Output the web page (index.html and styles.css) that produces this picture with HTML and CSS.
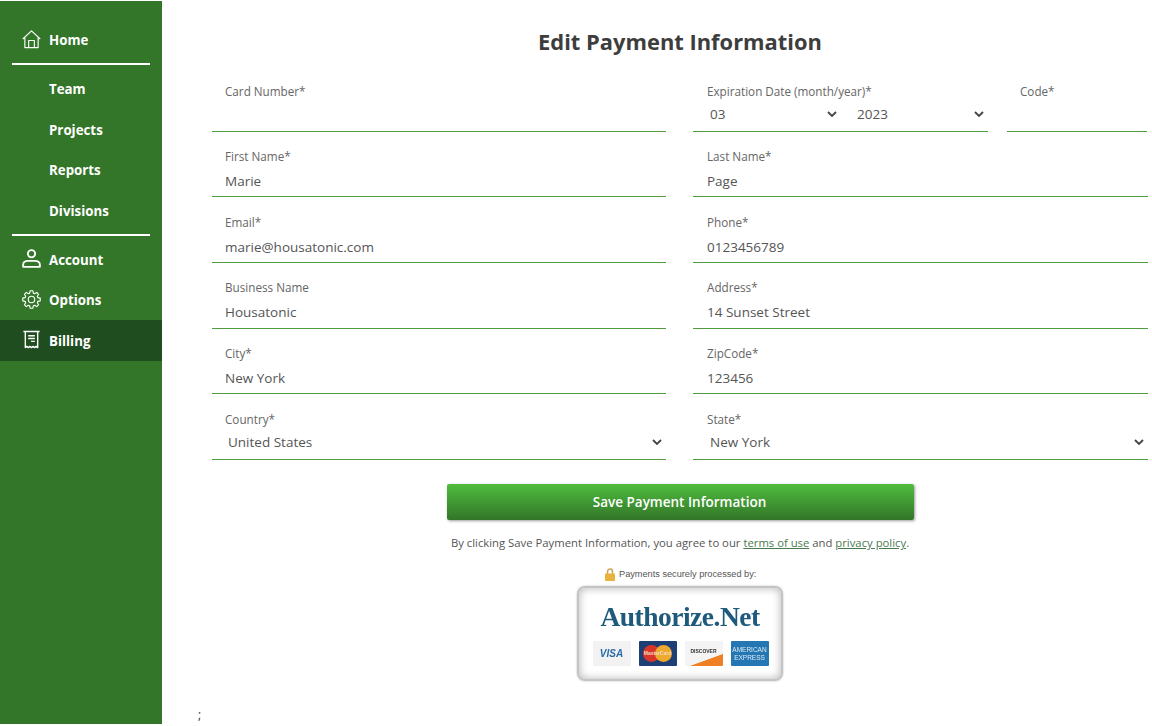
FILE: index.html
```html
<!DOCTYPE html>
<html lang="en">
<head>
    <meta charset="UTF-8">
    <meta name="viewport" content="width=device-width, initial-scale=1.0">
    <title>Edit Payment Information</title>
    <link rel="stylesheet" href="styles.css">
</head>
<body>
    <nav class="sidebar">
        <a class="nav-item" href="#">
            <svg class="nav-icon" viewBox="0 0 20 20"><path d="M.8 9.500 10 1l9.200 8.500M3 8v10.500h14V8M7 18.500V11h6v7.500"/></svg>
            Home
        </a>
        <hr class="nav-rule">
        <a class="nav-item" href="#">Team</a>
        <a class="nav-item" href="#">Projects</a>
        <a class="nav-item" href="#">Reports</a>
        <a class="nav-item" href="#">Divisions</a>
        <hr class="nav-rule">
        <a class="nav-item" href="#">
            <svg class="nav-icon icon-bold" viewBox="0 0 20 20"><circle cx="10" cy="5" r="3.800"/><path d="M1.200 18.800v-2.300c0-2.500 2.500-4 5-4h7.600c2.500 0 5 1.500 5 4v2.300z"/></svg>
            Account
        </a>
        <a class="nav-item" href="#">
            <svg class="nav-icon" viewBox="0 0 20 20"><circle cx="10" cy="10" r="3.400"/><path d="M8.070 3.270 8.550.81h2.900l.48 2.460 1.460.61 2.080-1.400 2.050 2.050-1.400 2.080.61 1.460 2.460.48v2.900l-2.460.48-.61 1.460 1.400 2.080-2.050 2.050-2.080-1.400-1.460.61-.48 2.460h-2.900l-.48-2.460-1.460-.61-2.080 1.400-2.050-2.050 1.400-2.080-.61-1.460-2.460-.48v-2.900l2.460-.48.61-1.460-1.400-2.080 2.050-2.050 2.080 1.400z"/></svg>
            Options
        </a>
        <a class="nav-item nav-active" href="#">
            <svg class="nav-icon icon-receipt" viewBox="0 0 20 20"><path d="M1.500 1.500h17M3.500 1.500v17l1.600-1.200 1.600 1.200 1.650-1.200L10 18.500l1.650-1.200 1.650 1.200 1.600-1.200 1.600 1.200v-17M6.500 6h7M6.500 9h7M9.500 12h4"/></svg>
            Billing
        </a>
    </nav>

    <main class="content">
        <h1 class="page-title">Edit Payment Information</h1>
        <form class="payment-form">
            <div class="form-row">
                <div class="field">
                    <label>Card Number*</label>
                    <input type="text">
                </div>
                <div class="expiry-row">
                    <div class="field col-right expiry">
                        <label>Expiration Date (month/year)*</label>
                        <div class="select-pair">
                            <div class="fake-select">03 <svg class="chevron" viewBox="0 0 10 6"><path d="M1 1l4 4 4-4"/></svg></div>
                            <div class="fake-select">2023 <svg class="chevron" viewBox="0 0 10 6"><path d="M1 1l4 4 4-4"/></svg></div>
                        </div>
                    </div>
                    <div class="field">
                        <label>Code*</label>
                        <input type="text">
                    </div>
                </div>
            </div>
            <div class="form-row">
                <div class="field"><label>First Name*</label><input type="text" value="Marie"></div>
                <div class="field col-right"><label>Last Name*</label><input type="text" value="Page"></div>
            </div>
            <div class="form-row">
                <div class="field"><label>Email*</label><input type="text" value="marie@housatonic.com"></div>
                <div class="field col-right"><label>Phone*</label><input type="text" value="0123456789"></div>
            </div>
            <div class="form-row">
                <div class="field"><label>Business Name</label><input type="text" value="Housatonic"></div>
                <div class="field col-right"><label>Address*</label><input type="text" value="14 Sunset Street"></div>
            </div>
            <div class="form-row">
                <div class="field"><label>City*</label><input type="text" value="New York"></div>
                <div class="field col-right"><label>ZipCode*</label><input type="text" value="123456"></div>
            </div>
            <div class="form-row">
                <div class="field">
                    <label>Country*</label>
                    <div class="fake-select">United States <svg class="chevron" viewBox="0 0 10 6"><path d="M1 1l4 4 4-4"/></svg></div>
                </div>
                <div class="field col-right">
                    <label>State*</label>
                    <div class="fake-select">New York <svg class="chevron" viewBox="0 0 10 6"><path d="M1 1l4 4 4-4"/></svg></div>
                </div>
            </div>
            <button type="button" class="save-button">Save Payment Information</button>
            <p class="terms">By clicking Save Payment Information, you agree to our <a href="#">terms of use</a> and <a href="#">privacy policy</a>.</p>
        </form>

        <div class="secure-note">
            <svg class="lock" viewBox="0 0 10 13"><path class="lock-arc" d="M2.500 6V3.500a2.500 2.500 0 0 1 5 0V6"/><rect y="5.500" width="10" height="7.500" rx="1"/></svg>
            Payments securely processed by:
        </div>
        <div class="auth-badge">
            <div class="auth-name">Authorize.Net</div>
            <div class="cards">
                <div class="card card-visa">VISA</div>
                <div class="card card-mc"><span class="mc-red"></span><span class="mc-yellow"></span><span class="mc-name">MasterCard</span></div>
                <div class="card card-discover">DISCOVER</div>
                <div class="card card-amex">AMERICAN EXPRESS</div>
            </div>
        </div>
        <p class="stray">;</p>
    </main>
</body>
</html>
```

FILE: styles.css
```css
html, body {
    height: 100%;
}
body {
    margin: 0;
    display: flex;
    height: 724px;
    font-family: "Open Sans", "Noto Sans", sans-serif;
    color: #444;
    background-color: white;
    overflow: hidden;
}
.sidebar {
    width: 162px;
    flex-shrink: 0;
    margin-top: 1px;
    padding-top: 18.500px;
    box-sizing: border-box;
    background-color: #337529;
    display: flex;
    flex-direction: column;
}
.nav-item {
    height: 40.500px;
    padding-top: 1.400px;
    padding-left: 49px;
    box-sizing: border-box;
    display: flex;
    align-items: center;
    position: relative;
    color: white;
    font-size: 13.300px;
    font-weight: 700;
    text-decoration: none;
}
.nav-active {
    background-color: #1f4d1f;
}
.nav-icon {
    position: absolute;
    left: 22px;
    top: 10px;
    width: 19px;
    height: 19px;
    fill: none;
    stroke: white;
    stroke-width: 1.200;
    stroke-linejoin: round;
}
.icon-bold {
    stroke-width: 2;
}
.icon-receipt {
    stroke-width: 1.500;
}
.nav-rule {
    height: 2px;
    margin: 3px 12px 3.500px;
    border: none;
    background-color: white;
}
.content {
    flex: 1;
    padding: 0 4px 0 50px;
    min-width: 0;
    position: relative;
}
.page-title {
    margin: 27px 0 16.800px;
    font-size: 21.900px;
    line-height: 30px;
    font-weight: 700;
    text-align: center;
    color: #3d3d3d;
}
.form-row {
    display: grid;
    grid-template-columns: 454px 455px;
    column-gap: 27px;
    height: 65.600px;
}
.field {
    display: flex;
    flex-direction: column;
    justify-content: flex-end;
    border-bottom: 1px solid #4f9d3e;
    box-sizing: border-box;
    height: 58px;
    min-width: 0;
}
.field label {
    padding-left: 13px;
    font-size: 11.700px;
    line-height: 16px;
    color: #666;
}
.field input {
    border: none;
    outline: none;
    width: 100%;
    box-sizing: border-box;
    height: 32.250px;
    padding: 1.600px 13px 0;
    font-family: inherit;
    font-size: 13.500px;
    color: #555;
}
.col-right label {
    padding-left: 14px;
}
.col-right input {
    padding-left: 14px;
}
.expiry-row {
    display: grid;
    grid-template-columns: 295px 140px;
    column-gap: 19px;
    margin-right: -1px;
}
.select-pair {
    display: grid;
    grid-template-columns: 148px 147px;
}
.select-pair .fake-select {
    padding-left: 17px;
    padding-right: 4px;
    padding-bottom: 2px;
}
.select-pair .fake-select + .fake-select {
    padding-left: 16px;
}
.fake-select {
    height: 32.250px;
    padding: 0 4px 1.400px 16px;
    box-sizing: border-box;
    display: flex;
    justify-content: space-between;
    align-items: center;
    font-size: 13.500px;
    color: #555;
}
.col-right > .fake-select {
    padding-left: 17px;
}
.chevron {
    width: 10px;
    height: 6px;
    fill: none;
    stroke: #444;
    stroke-width: 1.800;
}
.save-button {
    display: block;
    width: 467px;
    height: 36px;
    margin: 16.400px 0 0 235px;
    padding: 0 2px 0 0;
    border: none;
    border-radius: 2px;
    background: linear-gradient(#4fbd3e, #337529);
    box-shadow: 1px 1px 3px rgba(0, 0, 0, 0.4);
    color: white;
    font-family: inherit;
    font-size: 13.500px;
    font-weight: 600;
}
.terms {
    margin: 14.600px 0 0;
    font-size: 11.300px;
    line-height: 18px;
    text-align: center;
    color: #555;
}
.terms a {
    color: #4a7a50;
}
.secure-note {
    margin: 14px 0 0 393px;
    display: flex;
    align-items: center;
    gap: 4px;
    height: 16px;
    font-family: "Liberation Sans", sans-serif;
    font-size: 9.200px;
    color: #555;
}
.lock {
    width: 10px;
    height: 13px;
    fill: #e8b23c;
}
.lock-arc {
    fill: none;
    stroke: #c9a55a;
    stroke-width: 1.500;
}
.auth-badge {
    width: 206px;
    height: 95px;
    margin: 4px 0 0 365px;
    box-sizing: border-box;
    border: 2px solid #c4c4c4;
    border-radius: 8px;
    box-shadow: inset 0 0 8px rgba(0, 0, 0, 0.3), 0 0 2px rgba(0, 0, 0, 0.3);
    text-align: center;
    overflow: hidden;
    filter: blur(0.4px);
}
.auth-name {
    margin-top: 14px;
    font-family: "Liberation Serif", serif;
    font-size: 27.500px;
    line-height: 30px;
    font-weight: 700;
    letter-spacing: -0.500px;
    color: #1d5a7c;
}
.cards {
    margin-top: 9px;
    padding-left: 1px;
    display: flex;
    justify-content: center;
    gap: 8px;
}
.card {
    width: 38px;
    height: 25px;
    border-radius: 1px;
    position: relative;
    overflow: hidden;
    font-family: "Liberation Sans", sans-serif;
    display: flex;
    align-items: center;
    justify-content: center;
}
.card-visa {
    background-color: #f2f2f2;
    color: #2a6ca8;
    font-size: 10px;
    font-weight: 700;
    font-style: italic;
}
.card-mc {
    background-color: #1d3f73;
}
.mc-red, .mc-yellow {
    width: 17px;
    height: 17px;
    border-radius: 50%;
}
.mc-red {
    background-color: #d9362b;
}
.mc-yellow {
    margin-left: -5px;
    background-color: #eea92f;
}
.mc-name {
    position: absolute;
    left: 0;
    right: 0;
    top: 9px;
    font-size: 5px;
    line-height: 7px;
    font-weight: 700;
    color: #f7d9c0;
}
.card-discover {
    background: linear-gradient(160deg, #f4f4f4 68%, #ee7f24 70%);
    color: #333;
    font-size: 5px;
    font-weight: 700;
    padding-bottom: 5px;
    box-sizing: border-box;
}
.card-amex {
    background-color: #2477b3;
    color: #dcebf6;
    font-size: 6.500px;
    line-height: 8px;
    text-align: center;
}
.stray {
    position: absolute;
    left: 36px;
    top: 706px;
    margin: 0;
    font-size: 12px;
    line-height: 18px;
    color: #333;
}
```
